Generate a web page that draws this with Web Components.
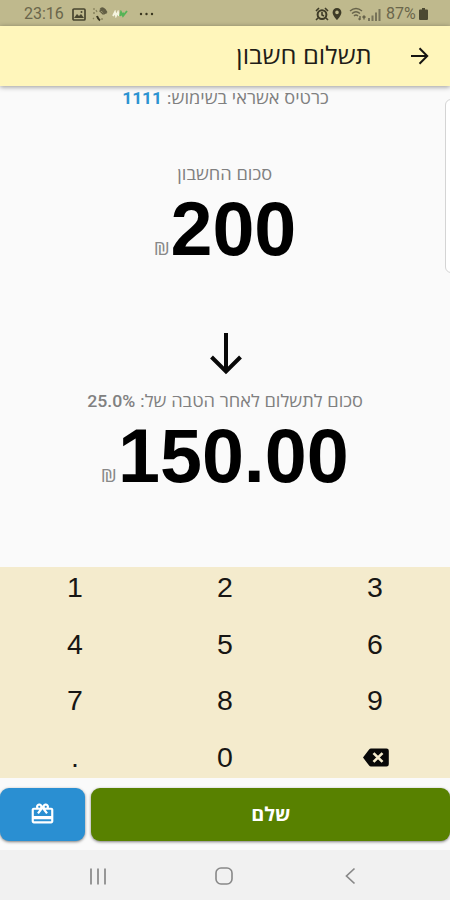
<!DOCTYPE html>
<html lang="he">
<head>
<meta charset="utf-8">
<title>תשלום חשבון</title>
<style>
html,body{margin:0;height:100%}
body{background:#fafafa;font-family:Roboto,"Open Sans","Liberation Sans",sans-serif;overflow:hidden}
</style>
</head>
<body>
<pay-screen></pay-screen>
<script>
const define = (name, html) => customElements.define(name, class extends HTMLElement {
  constructor() {
    super();
    this.attachShadow({mode: 'open'}).innerHTML = html;
  }
});

define('status-bar', `<style>
:host{display:flex;height:26px;box-sizing:border-box;background:#bfb98d;color:#6a664b;padding:2px 22px 0 24px;align-items:center;font:16px/24px Roboto,sans-serif}
svg{display:block;flex:none}
.gap{flex:1}
.time{width:48px}
.pct{width:31px;margin-left:5px;white-space:nowrap;font-size:16px}
</style>
<span class="time">23:16</span>
<svg width="14" height="13" viewBox="0 0 14 13"><rect x="1" y="1" width="12" height="11" rx="1" fill="none" stroke="#48452f" stroke-width="1.7"/><path d="M2 10l3-4 2 2 2-2 3 4z" fill="#48452f"/><circle cx="9.5" cy="4" r="1" fill="#48452f"/></svg>
<svg style="margin-left:6px" width="16" height="16" viewBox="0 0 16 16" fill="none" stroke="#615d43" stroke-width="1.3"><path d="M8 3.500q2-3 5 0l2 3M8 5l3-2 3 4-3 1zM9 3l4 5" /><path d="M5 10q1 3 3 4.500" stroke="#38351f" stroke-width="2"/><path d="M2 2v2M1 7h2M4 4l1 2M1 12l1 1M10 12v2" stroke="#88835c"/></svg>
<svg style="margin-left:4px" width="17" height="8" viewBox="0 0 17 8" fill="none" stroke-width="1.8"><path d="M1 6l2-4 1 4 2-4 1 4" stroke="#f4f3df"/><path d="M8 6l1-4 2 4 4-5M9 5l3-2" stroke="#55b456"/></svg>
<svg style="margin-left:10px" width="16" height="4" viewBox="0 0 16 4" fill="#39361f"><circle cx="2" cy="2" r="1.2"/><circle cx="7.5" cy="2" r="1.2"/><circle cx="13" cy="2" r="1.2"/></svg>
<span class="gap"></span>
<svg width="14" height="14" viewBox="0 0 14 14" fill="none" stroke="#3e3b27"><circle cx="7" cy="7.6" r="4.4" stroke-width="2"/><path d="M7 5v3l2 1M1 4l3-3M10 1l3 3M3 11l-2 2M11 11l2 2" stroke-width="1.6"/></svg>
<svg style="margin-left:3px" width="10" height="14" viewBox="0 0 10 14"><path fill="#3e3b27" fill-rule="evenodd" d="M5 1a4.4 4.4 0 0 0-4.4 4.4C.6 8.4 5 13 5 13s4.400-4.600 4.400-7.600A4.400 4.400 0 0 0 5 1zm0 2.600a1.800 1.800 0 1 1 0 3.600 1.800 1.800 0 0 1 0-3.600z"/></svg>
<svg style="margin-left:7px" width="18" height="14" viewBox="0 0 18 14" fill="none" stroke="#67634a" stroke-width="1.4"><path d="M1 4q6-5 12 0M3 6.500q4-3.500 8 0M5 9q2-2 4 0"/><path d="M11 9v4M9.500 11.500l1.500 1.500M15 12.500V9M13.500 10.500L15 9l1.500 1.500"/></svg>
<svg style="margin-left:1px" width="13" height="13" viewBox="0 0 13 13" fill="#777359"><path d="M0 10h2v3H0zM3.500 7.500h2V13h-2zM7 4.500h2V13H7zM10.500 1h2v12h-2z"/></svg>
<span class="pct">87%</span>
<svg style="margin-left:2px" width="9" height="12" viewBox="0 0 9 12"><path fill="#4c4932" d="M3 0h3v1.500h2q1 0 1 1V11q0 1-1 1H1q-1 0-1-1V2.500q0-1 1-1h2z"/></svg>`);

define('app-bar', `<style>
:host{display:flex;position:relative;z-index:1;direction:rtl;align-items:center;height:60px;box-sizing:border-box;background:#fff6bb;padding:0 21px 0 0;box-shadow:0 1px 5px rgba(0,0,0,.4);color:#1f1d18}
svg{display:block}
.t{font:24px/34px "Open Sans",sans-serif;margin:-2px 38px 0 0;white-space:nowrap;transform:scaleX(1.06);transform-origin:right}
</style>
<svg width="19" height="18" viewBox="0 0 19 18" fill="none" stroke="#161511" stroke-width="2"><path d="M1 9h16M9.500 1.300L17.200 9l-7.700 7.700"/></svg>
<span class="t"><slot></slot></span>`);

define('money-amount', `<style>
:host{display:flex;flex-direction:column;align-items:center;color:#808080}
.l{direction:rtl;font:16.800px/24px "Open Sans",sans-serif;white-space:nowrap;transform:scaleX(1.085)}
.v{display:flex;direction:ltr;align-items:baseline;font:bold 75.500px/86px "Liberation Sans",sans-serif;color:#000;padding-left:2px;margin-top:var(--pull,0)}
.c{font:17.500px/24px "Open Sans",sans-serif;color:#888;margin-right:1px;transform:scaleX(1.16);transform-origin:right}
</style>
<div class="l"><slot name="label"></slot></div>
<div class="v"><span class="c">₪</span><slot></slot></div>`);

define('pay-content', `<style>
:host{display:flex;flex-direction:column;position:relative;height:481px;overflow:hidden;background:#fafafa}
.card{direction:rtl;text-align:center;font:16.800px/24px "Open Sans",sans-serif;color:#808080;height:24px;white-space:nowrap;padding-left:1px;transform:scaleX(1.085)}
.card b{color:#2b93d1;font:bold 16px/24px Roboto,sans-serif}
.one{margin-top:52px}
svg{display:block;margin:60px auto 0;position:relative;left:.5px}
.two{margin-top:13px;--pull:-1px}
b{font:500 16.300px/24px Roboto,sans-serif}
.peek{position:absolute;left:445px;top:13px;width:40px;height:172px;border:1px solid #d4d4d4;border-radius:6px;background:#fff;box-sizing:content-box}
</style>
<div class="card">כרטיס אשראי בשימוש: <b>1111</b></div>
<money-amount class="one"><span slot="label">סכום החשבון</span>200</money-amount>
<svg width="34" height="44" viewBox="0 0 34 44" fill="none" stroke="#080808" stroke-width="4"><path d="M17 1v38M2.500 25L17 39.500 31.500 25"/></svg>
<money-amount class="two"><span slot="label">סכום לתשלום לאחר הטבה של: <b>25.0%</b></span>150.00</money-amount>
<div class="peek"></div>`);

define('key-pad', `<style>
:host{display:grid;grid-template-columns:repeat(3,1fr);grid-template-rows:repeat(3,56.600px) 41.200px;height:211px;background:#f4ebcd;font:28.500px/40px "Liberation Sans",sans-serif;color:#171614;text-align:center;overflow:hidden}
svg{display:block;margin:11px auto 0;position:relative;left:.5px}
</style>
<span>1</span><span>2</span><span>3</span><span>4</span><span>5</span><span>6</span><span>7</span><span>8</span><span>9</span><span>.</span><span>0</span>
<span><svg width="26" height="19" viewBox="0 0 26 20" preserveAspectRatio="none"><path fill="#080808" d="M8 .5h15.500q2.300 0 2.300 2.300v14.400q0 2.300-2.300 2.300H8q-1.200 0-1.900-1L0 10l6.100-8.500Q6.800.5 8 .5z"/><path d="M10.500 5.300l9 9.400M19.500 5.300l-9 9.400" stroke="#f4ebcd" stroke-width="2.600"/></svg></span>`);

define('pay-button', `<style>
:host{display:flex;align-items:center;justify-content:center;height:53px;border-radius:9px;background:var(--bg);color:#fff;box-shadow:0 1px 3px rgba(0,0,0,.5);font:bold 19px/28px "Open Sans",sans-serif}
span{display:block;transform:scaleX(1.04);margin-top:-2px}
</style><span><slot></slot></span>`);

define('action-row', `<style>
:host{display:grid;grid-template-columns:85px 1fr;gap:6px;height:72px;box-sizing:border-box;padding-top:10px;background:#fafafa}
svg{display:block}
</style>
<pay-button style="--bg:#2a8fd2"><svg width="25" height="26" viewBox="0 0 24 24" fill="#fff"><path d="M20 6h-2.180c.110-.310.180-.650.180-1 0-1.660-1.340-3-3-3-1.050 0-1.960.540-2.500 1.350l-.500.670-.500-.680C10.960 2.540 10.050 2 9 2 7.340 2 6 3.340 6 5c0 .350.070.690.180 1H4c-1.110 0-1.990.890-1.990 2L2 19c0 1.110.890 2 2 2h16c1.110 0 2-.890 2-2V8c0-1.110-.890-2-2-2zm-5-2c.550 0 1 .450 1 1s-.450 1-1 1-1-.450-1-1 .450-1 1-1zM9 4c.550 0 1 .450 1 1s-.450 1-1 1-1-.450-1-1 .450-1 1-1zm11 15H4v-2h16v2zm0-5H4V8h5.080L7 10.830 8.620 12 11 8.760l1-1.360 1 1.360L15.380 12 17 10.830 14.920 8H20v6z"/></svg></pay-button>
<pay-button style="--bg:#588100">שלם</pay-button>`);

define('nav-bar', `<style>
:host{display:grid;grid-template-columns:18px 18px 11px;justify-content:space-between;height:50px;align-items:center;background:#f1f1f1;box-sizing:border-box;padding:2px 94px 0 89px}
svg{display:block}
.home{margin-left:-2px}
</style>
<svg width="18" height="17" viewBox="0 0 18 17" stroke="#888" stroke-width="1.700"><path d="M2 .5v16M9 .5v16M16 .5v16"/></svg>
<svg class="home" width="18" height="18" viewBox="0 0 18 18" fill="none" stroke="#888" stroke-width="1.600"><rect x="1" y="1" width="16" height="16" rx="5"/></svg>
<svg width="11" height="18" viewBox="0 0 11 18" fill="none" stroke="#888" stroke-width="1.700"><path d="M9.500 1.500L1.500 9l8 7.500"/></svg>`);

define('pay-screen', `<style>:host{display:flex;flex-direction:column;width:450px;height:900px;overflow:hidden}</style>
<status-bar></status-bar><app-bar>תשלום חשבון</app-bar><pay-content></pay-content><key-pad></key-pad><action-row></action-row><nav-bar></nav-bar>`);
</script>
</body>
</html>
